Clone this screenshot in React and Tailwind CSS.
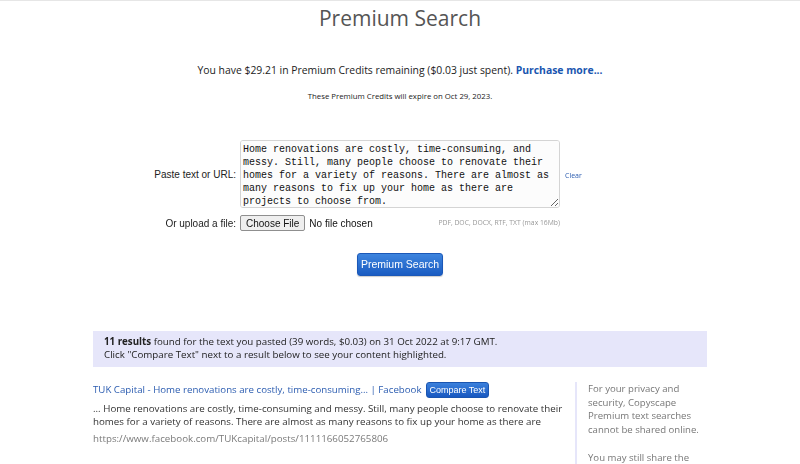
const sans = { fontFamily: '"Open Sans", "Liberation Sans", sans-serif' };

const Row = ({ label, children }) => (
  <div className="flex items-center">
    <div className="w-[236px] text-right text-[10px] text-[#222] font-['Liberation_Sans',Arial,sans-serif]">
      {label}
    </div>
    <div className="ml-[4px] flex items-center">{children}</div>
  </div>
);

const ResultItem = () => (
  <div className="w-[470px] pt-[15px]">
    <div className="flex items-center">
      <a className="text-[9.7px] leading-[16px] text-[#2b5cb0] whitespace-nowrap">
        TUK Capital - Home renovations are costly, time-consuming... | Facebook
      </a>
      <button className="ml-[4px] h-[16px] px-[3px] rounded-[3px] bg-gradient-to-b from-[#3a80dc] to-[#1858c0] border border-[#1a55b0] text-white text-[9px] leading-[14px] whitespace-nowrap font-['Liberation_Sans',Arial,sans-serif]">
        Compare Text
      </button>
    </div>
    <p className="mt-[4px] text-[9.75px] leading-[13px] text-[#333] w-[474px]">
      ... Home renovations are costly, time-consuming and messy. Still, many people choose to renovate their
      homes for a variety of reasons. There are almost as many reasons to fix up your home as there are
    </p>
    <p className="mt-[4px] text-[9.75px] leading-[13px] text-[#7a7a7a]">
      https://www.facebook.com/TUKcapital/posts/1111166052765806
    </p>
  </div>
);

export default function App() {
  return (
    <div
      className="w-[800px] h-[464px] overflow-hidden bg-white border-t border-[#e6e6e6]"
      style={sans}
    >
      <h1 className="mt-[4px] text-center text-[21px] leading-[26px] text-[#555]">Premium Search</h1>

      <p className="mt-[30px] text-center text-[10.4px] leading-[18px] text-[#222]">
        You have $29.21 in Premium Credits remaining ($0.03 just spent).{" "}
        <a className="font-bold text-[#1a56b0]">Purchase more...</a>
      </p>
      <p className="mt-[11px] text-center text-[7.8px] leading-[12px] text-[#222]">
        These Premium Credits will expire on Oct 29, 2023.
      </p>

      <div className="mt-[38px]">
        <Row label="Paste text or URL:">
          <textarea
            readOnly
            className="w-[320px] h-[68px] resize-y border border-[#d4d4d4] rounded-[3px] bg-[#fcfcfc] px-[2px] pt-[2px] text-[10px] leading-[13px] text-[#111] font-['Liberation_Mono','Courier_New',monospace] outline-none"
            defaultValue="Home renovations are costly, time-consuming, and messy. Still, many people choose to renovate their homes for a variety of reasons. There are almost as many reasons to fix up your home as there are projects to choose from."
          />
          <a className="ml-[5px] mt-[4px] text-[7px] text-[#2b5cb0]">Clear</a>
        </Row>
        <div className="mt-[7px]">
          <Row label="Or upload a file:">
            <div className="w-[320px] flex items-center justify-between">
              <div className="flex items-center font-['Liberation_Sans',Arial,sans-serif] text-[10px] text-[#111]">
                <span className="h-[16px] px-[5px] flex items-center border border-[#8f8f8f] rounded-[2px] bg-[#efefef]">
                  Choose File
                </span>
                <span className="ml-[4px]">No file chosen</span>
              </div>
              <span className="text-[6.8px] text-[#999]">PDF, DOC, DOCX, RTF, TXT (max 16Mb)</span>
            </div>
          </Row>
        </div>
      </div>

      <div className="mt-[22px] flex justify-center">
        <button className="w-[86px] h-[23px] rounded-[3px] bg-gradient-to-b from-[#3d84de] to-[#1a5cc2] border border-[#1b58b8] text-white text-[10.5px] font-['Liberation_Sans',Arial,sans-serif] shadow-[0_1px_1px_rgba(0,0,0,0.2)]">
          Premium Search
        </button>
      </div>

      <div className="mt-[55px] mx-auto w-[614px] h-[36px] bg-[#e6e6fa] px-[11px] pt-[4px] text-[9.75px] leading-[13px] text-[#222]">
        <p>
          <b>11 results</b> found for the text you pasted (39 words, $0.03) on 31 Oct 2022 at 9:17 GMT.
        </p>
        <p>Click "Compare Text" next to a result below to see your content highlighted.</p>
      </div>

      <div className="mx-auto w-[614px] flex">
        <ResultItem />
        <div className="ml-[12px] mt-[15px] border-l-2 border-[#e6e6fa] pl-[11px] h-[120px] text-[9.6px] leading-[13.7px] text-[#777]">
          <p>
            For your privacy and
            <br />
            security, Copyscape
            <br />
            Premium text searches
            <br />
            cannot be shared online.
          </p>
          <p className="mt-[13.7px]">You may still share the</p>
        </div>
      </div>
    </div>
  );
}
